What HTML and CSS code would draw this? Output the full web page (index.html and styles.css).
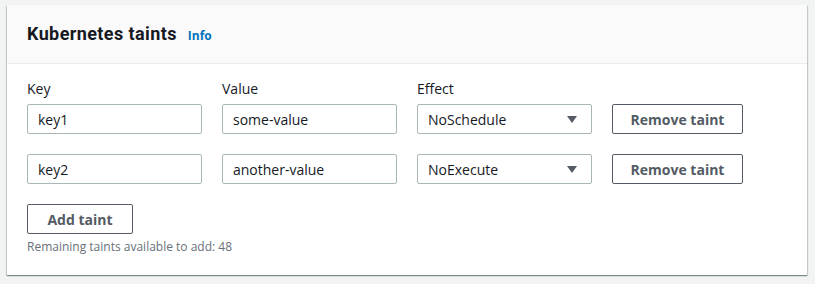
FILE: index.html
```html
<!DOCTYPE html>
<html lang="en">
<head>
    <meta charset="UTF-8">
    <meta name="viewport" content="width=device-width, initial-scale=1.0">
    <link rel="stylesheet" href="styles.css">
</head>
<body>

<div class="card">
    <div class="card-header">
        <h2>Kubernetes taints</h2>
        <a class="info" href="#">Info</a>
    </div>

    <div class="card-body">
        <div class="taints">
            <div class="label">Key</div>
            <div class="label">Value</div>
            <div class="label">Effect</div>
            <div></div>

            <input class="field" type="text" value="key1">
            <input class="field" type="text" value="some-value">
            <div class="select">NoSchedule <span class="caret"></span></div>
            <button class="btn">Remove taint</button>

            <input class="field" type="text" value="key2">
            <input class="field" type="text" value="another-value">
            <div class="select">NoExecute <span class="caret"></span></div>
            <button class="btn">Remove taint</button>
        </div>

        <button class="btn add">Add taint</button>
        <div class="hint">Remaining taints available to add: 48</div>
    </div>
</div>

</body>
</html>
```

FILE: styles.css
```css
body {
    margin: 0;
    padding: 5px 8px 10px 7px;
    background: #f2f3f3;
    font-family: "Open Sans", "Noto Sans", Arial, sans-serif;
    color: #16191f;
}

.card {
    background: #fff;
    box-shadow: 0 1px 1px 0 rgba(0, 28, 36, .3), 1px 1px 1px 0 rgba(0, 28, 36, .15), -1px 1px 1px 0 rgba(0, 28, 36, .15);
}

.card-header {
    display: flex;
    align-items: baseline;
    gap: 11px;
    height: 59px;
    box-sizing: border-box;
    padding: 17px 20px 0;
    background: #fafafa;
    border-bottom: 1px solid #eaeded;
}

.card-header h2 {
    margin: 0;
    font-family: Roboto, "Open Sans", sans-serif;
    font-size: 18px;
    font-weight: 700;
    line-height: 24px;
    letter-spacing: 0.4px;
}

.info {
    color: #0073bb;
    font-size: 12px;
    font-weight: 700;
    text-decoration: none;
}

.card-body {
    padding: 14px 20px 20px;
}

.taints {
    display: grid;
    grid-template-columns: 175px 175px 175px 131px;
    column-gap: 20px;
    row-gap: 20px;
}

.label {
    font-size: 14px;
    line-height: 22px;
    margin-bottom: -16px;
}

.field, .select {
    height: 30px;
    box-sizing: border-box;
    border: 1px solid #aab7b8;
    border-radius: 2px;
    padding: 0 10px;
    font-family: inherit;
    font-size: 14px;
    color: #16191f;
    background: #fff;
}

.select {
    display: flex;
    align-items: center;
    justify-content: space-between;
    padding-right: 14px;
}

.caret {
    width: 0;
    height: 0;
    border-left: 5px solid transparent;
    border-right: 5px solid transparent;
    border-top: 7px solid #545b64;
}

.btn {
    height: 30px;
    box-sizing: border-box;
    border: 1px solid #545b64;
    border-radius: 2px;
    background: #fff;
    color: #545b64;
    font-family: inherit;
    font-size: 14px;
    font-weight: 700;
    padding: 0 10px;
    cursor: pointer;
}

.add {
    margin-top: 20px;
    width: 106px;
}

.hint {
    margin-top: 5px;
    font-size: 12px;
    line-height: 16px;
    color: #687078;
}
```
